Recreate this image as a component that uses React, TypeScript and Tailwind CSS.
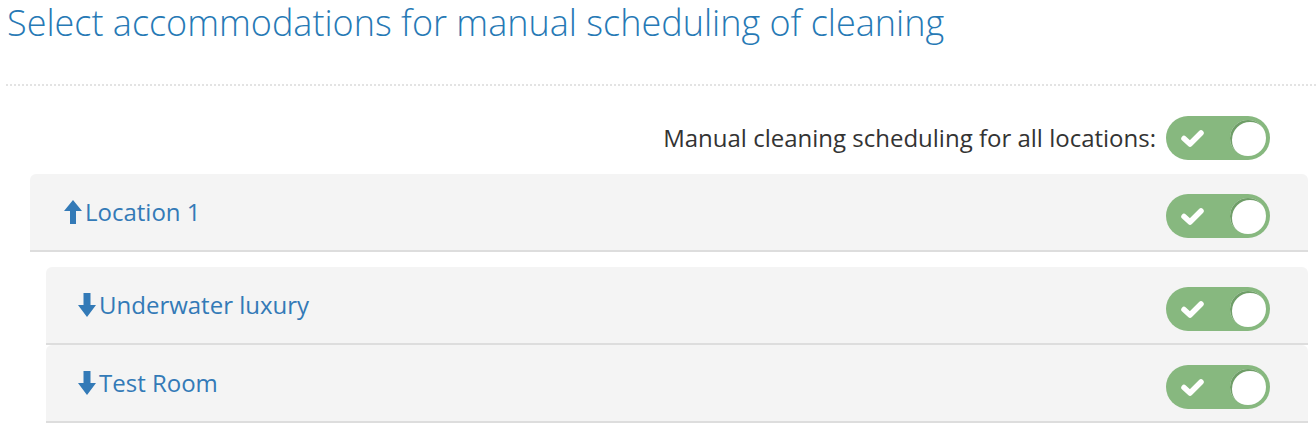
import React from "react";

function Toggle({ className }: { className?: string }) {
  return (
    <div
      className={
        "relative w-[104px] h-[44px] rounded-full bg-[#87b87f] shrink-0 " +
        (className ?? "")
      }
    >
      <svg
        className="absolute left-[14px] top-[12px]"
        width="26"
        height="20"
        viewBox="0 0 26 20"
      >
        <polyline
          points="4,10.5 10,16 21,5"
          fill="none"
          stroke="#ffffff"
          strokeWidth="5.5"
          strokeLinecap="round"
          strokeLinejoin="round"
        />
      </svg>
      <div className="absolute right-[4px] top-[4px] w-[36px] h-[36px] rounded-full bg-white shadow-[inset_2px_2px_0_0_#6f9e68,0_0_0_1px_#87b87f]" />
    </div>
  );
}

function ArrowUp() {
  return (
    <svg width="18" height="24" viewBox="0 0 18 24" className="shrink-0">
      <polygon points="9,0 18,11 12,11 12,24 6,24 6,11 0,11" fill="#337ab7" />
    </svg>
  );
}

function ArrowDown() {
  return (
    <svg width="18" height="24" viewBox="0 0 18 24" className="shrink-0">
      <polygon points="5.5,0 12.5,0 12.5,12 18,12 9,24 0,12 5.5,12" fill="#337ab7" />
    </svg>
  );
}

function Row({
  label,
  up,
  className,
}: {
  label: string;
  up?: boolean;
  className?: string;
}) {
  return (
    <div
      className={
        "flex items-center justify-between h-[78px] bg-[#f4f4f4] border-b-2 border-[#dddddd] rounded-t-[6px] pr-[38px] " +
        (className ?? "")
      }
    >
      <div className="flex items-center gap-[3px] text-[24px] text-[#337ab7]">
        {up ? <ArrowUp /> : <ArrowDown />}
        <span>{label}</span>
      </div>
      <Toggle className="mt-[7px]" />
    </div>
  );
}

export default function App() {
  return (
    <div className="w-[1316px] h-[424px] overflow-hidden bg-white font-['Open_Sans',sans-serif] pl-[6px]">
      <h1 className="text-[36px] font-light leading-[46px] text-[#2679b5] pl-[1px]">
        Select accommodations for manual scheduling of cleaning
      </h1>
      <div className="mt-[38px] border-t-2 border-dotted border-[#e3e3e3]" />
      <div className="pl-[24px] pr-[8px]">
        <div className="flex items-center justify-end gap-[10px] pr-[38px] pt-[30px] pb-[14px]">
          <span className="text-[24px] text-[#333333]">
            Manual cleaning scheduling for all locations:
          </span>
          <Toggle />
        </div>
        <Row label="Location 1" up className="pl-[34px]" />
        <div className="ml-[16px] mt-[15px]">
          <Row label="Underwater luxury" className="pl-[32px]" />
          <Row label="Test Room" className="pl-[32px]" />
        </div>
      </div>
    </div>
  );
}
